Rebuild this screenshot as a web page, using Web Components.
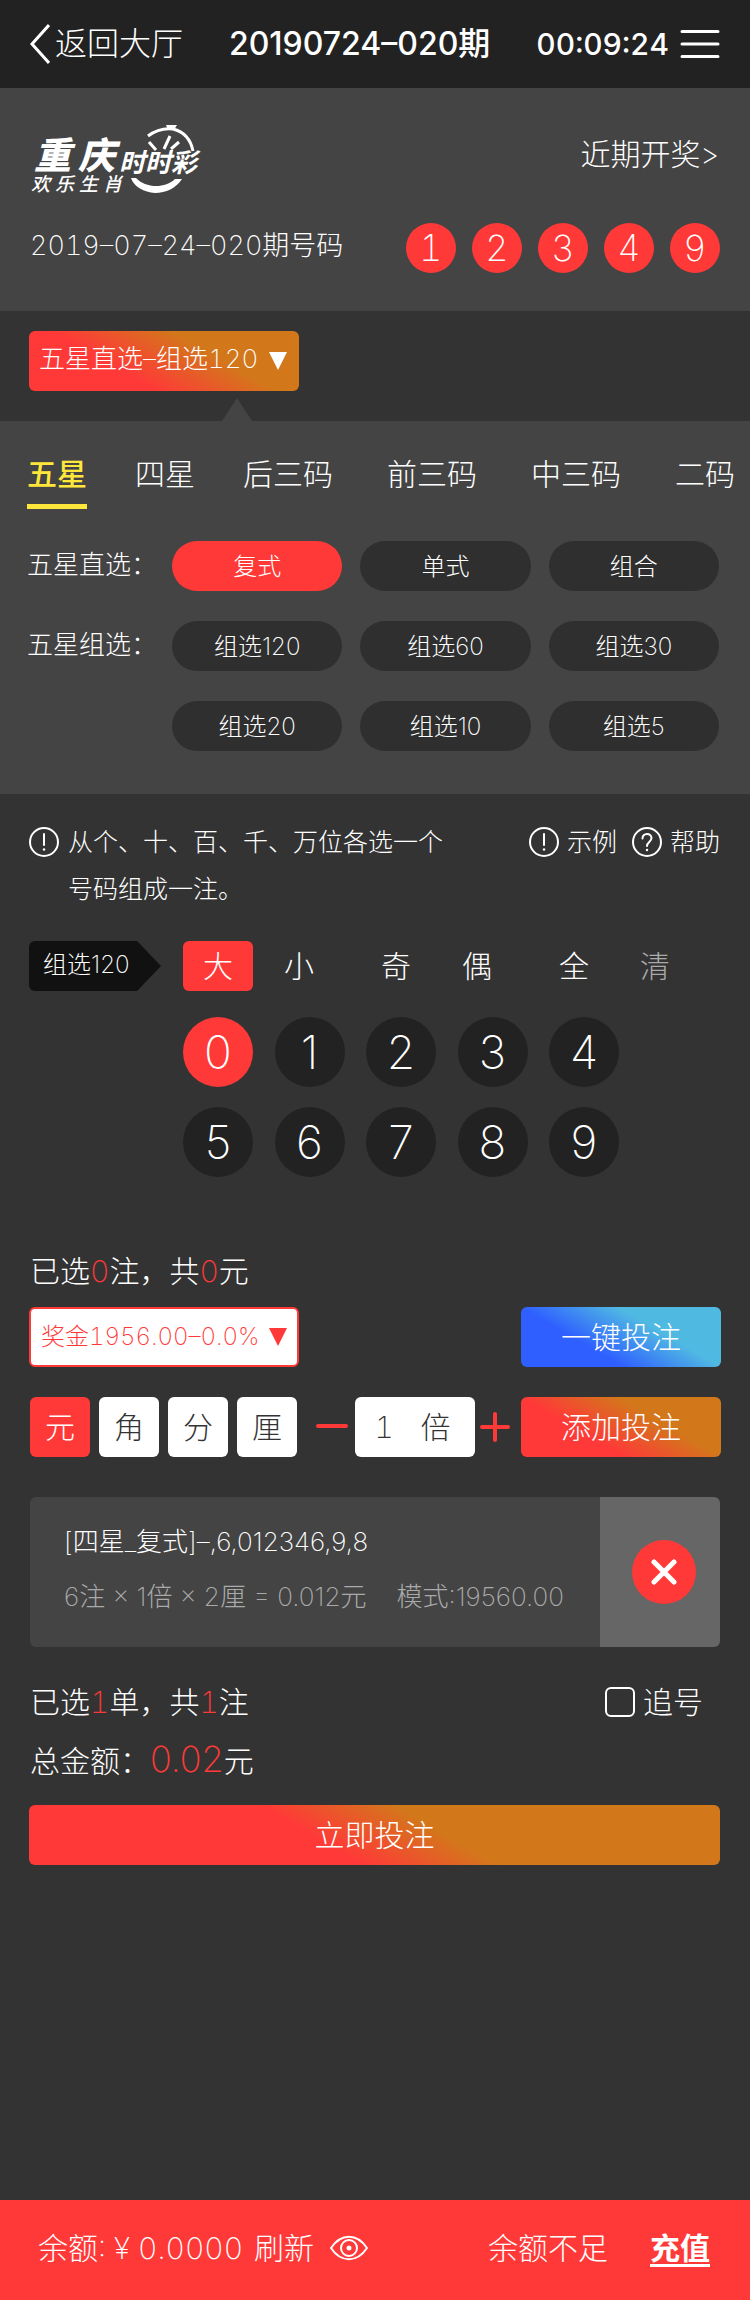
<!DOCTYPE html>
<html lang="zh-CN">
<head>
<meta charset="utf-8">
<meta name="viewport" content="width=device-width, initial-scale=1">
<title>重庆时时彩</title>
<style>
  html, body { margin: 0; padding: 0; }
  body {
    --red: #ff3938; --orange: #d3771b; --panel: #444; --page: #333;
    background: var(--page); color: #fff;
    font-family: Inter, "Noto Sans CJK SC", sans-serif; font-weight: 200; font-size: 30px; line-height: 40px;
    font-variant-numeric: tabular-nums;
  }
</style>
</head>
<body>
<lottery-page></lottery-page>

<script>
const base = `
  *, *::before, *::after { box-sizing: border-box; }
  button, select, input { font: inherit; font-variant-numeric: inherit; color: inherit; background: none; border: 0; margin: 0; padding: 0; border-radius: 0; }
  button { cursor: pointer; white-space: nowrap; }
  a { color: inherit; text-decoration: none; }
  svg { display: block; flex: none; }
  em { font-style: normal; color: var(--red); }
`;
function define(name, css, html) {
  const template = document.createElement('template');
  template.innerHTML = `<style>${base}${css}</style>${html}`;
  customElements.define(name, class extends HTMLElement {
    constructor() {
      super();
      this.attachShadow({ mode: 'open' }).append(template.content.cloneNode(true));
    }
  });
}

define('app-header', `
  :host { display: block; background: #222; }
  header { display: flex; align-items: center; justify-content: space-between; height: 88px; padding: 0 30px; font-size: 32px; }
  a, .right { display: flex; align-items: center; }
  a { gap: 5px; }
  .right { gap: 11px; }
  h1 { margin: 0; font-size: 32px; line-height: 40px; font-variant-numeric: normal; }
  h1, time { font-weight: 500; }
  time { font-size: 30px; }
`, `
  <header>
    <a href="#hall"><svg width="20" height="40" viewBox="0 0 20 40" fill="none" stroke="#fff" stroke-width="3"><path d="M19 1 2 20l17 19"/></svg>返回大厅</a>
    <h1>20190724–020期</h1>
    <div class="right"><time>00:09:24</time>
      <button aria-label="菜单"><svg width="40" height="30" viewBox="0 0 40 30" stroke="#fff" stroke-width="3" stroke-linecap="round"><path d="M2 2.500h36M2 15h36M2 27.500h36"/></svg></button></div>
  </header>`);

define('game-logo', `
  :host { display: block; }
  svg { overflow: visible; font-family: "Noto Sans CJK SC", sans-serif; font-style: italic; }
`, `
  <svg width="172" height="70" viewBox="0 0 172 70" fill="#fff">
    <text x="4 48" y="45" font-size="37" font-weight="900">重庆</text>
    <text x="89" y="48" font-size="26" font-weight="700">时时彩</text>
    <text x="1 25 49 73" y="67" font-size="19" font-weight="500">欢乐生肖</text>
    <path d="M136 1h11l-3 5h-6z"/>
    <g fill="none" stroke="#fff">
      <path stroke-width="3" d="M118 12c8-6 17-8 25-7 12 3 18 12 20 22"/>
      <path stroke-width="3" d="m140 12-6 13M119 18l7 8M149 18l-8 7"/>
    </g>
    <path d="M101 54h5c9 10 29 11 39 1h7c-6 9-16 14-27 14-11-1-21-6-24-15z"/>
  </svg>`);

define('number-ball', `
  :host { display: flex; align-items: center; justify-content: center; width: 50px; height: 50px; border-radius: 50%; background: var(--red); font-size: 36px; }
`, `<slot></slot>`);

define('draw-panel', `
  :host { display: block; background: var(--panel); padding: 36px 30px 38px 30px; }
  div { display: flex; justify-content: space-between; align-items: center; }
  .top { height: 70px; margin-bottom: 29px; }
  .top a { margin-bottom: 10px; }
  .date { font-size: 27px; padding-bottom: 4px; }
  .balls { gap: 16px; }
`, `
  <div class="top"><game-logo></game-logo><a href="#recent">近期开奖&gt;</a></div>
  <div><span class="date">2019–07–24–020期号码</span>
    <div class="balls"><number-ball>1</number-ball><number-ball>2</number-ball><number-ball>3</number-ball><number-ball>4</number-ball><number-ball>9</number-ball></div></div>`);

/* Drop-down: the host's label and option attributes fill a native select. */
customElements.define('drop-down', class extends HTMLElement {
  constructor() {
    super();
    this.attachShadow({ mode: 'open' }).innerHTML = `<style>${base}
      :host { display: block; position: relative; width: 270px; height: 60px; color: #fff; font-size: 26px; }
      select { appearance: none; width: 100%; height: 60px; padding: 0 30px 4px 10px; border-radius: 6px; cursor: pointer;
        background: linear-gradient(30deg, var(--red) 34%, var(--orange) 66%); }
      svg { position: absolute; right: 12px; top: 21px; pointer-events: none; fill: currentColor; }
      :host([outlined]) { color: var(--red); font-size: 24px; }
      :host([outlined]) select { background: #fff; border: 2px solid var(--red); padding-bottom: 0; }
    </style><select aria-label="${this.getAttribute('label')}"><option>${this.getAttribute('option')}</option></select>
    <svg width="18" height="18" viewBox="0 0 18 18"><path d="M0 0h18L9 18z"/></svg>`;
  }
});

define('play-picker', `
  :host { display: block; padding: 20px 29px 7px; }
  svg { margin-left: 193px; margin-top: 7px; fill: var(--panel); margin-bottom: -7px; }
`, `<drop-down label="玩法" option="五星直选–组选120"></drop-down>
  <svg width="30" height="23" viewBox="0 0 30 23"><path d="M0 23 15 0l15 23z"/></svg>`);

define('play-tabs', `
  :host { display: block; }
  nav { display: flex; padding: 33px 0 0 27px; overflow: hidden; }
  button { margin-right: 48px; flex: none; padding-bottom: 10px; border-bottom: 5px solid transparent; }
  .wide { margin-right: 54px; }
  .on { font-weight: 500; color: #ffe63a; border-color: #ffe63a; }
`, `<nav><button class="on">五星</button><button>四星</button><button class="wide">后三码</button><button class="wide">前三码</button><button class="wide">中三码</button><button>二码</button></nav>`);

define('option-group', `
  :host { display: grid; grid-template-columns: 145px 1fr; padding: 0 31px 0 27px; margin-bottom: 30px; }
  .label { font-size: 26px; line-height: 40px; padding-top: 4px; }
  .pills { display: grid; grid-template-columns: repeat(3, 1fr); gap: 30px 18px; }
`, `<span class="label"><slot name="label"></slot></span><div class="pills"><slot></slot></div>`);

define('pill-button', `
  :host { display: block; font-variant-numeric: normal; }
  button { width: 100%; height: 50px; border-radius: 25px; background: #2f2f2f; font-size: 24px; padding-top: 2px; }
  :host([active]) button { background: var(--red); }
`, `<button><slot></slot></button>`);

define('play-panel', `
  :host { display: block; background: var(--panel); padding-bottom: 13px; }
  play-tabs { margin-bottom: 32px; }
`, `<play-tabs></play-tabs>
  <option-group><span slot="label">五星直选：</span><pill-button active>复式</pill-button><pill-button>单式</pill-button><pill-button>组合</pill-button></option-group>
  <option-group><span slot="label">五星组选：</span><pill-button>组选120</pill-button><pill-button>组选60</pill-button><pill-button>组选30</pill-button><pill-button>组选20</pill-button><pill-button>组选10</pill-button><pill-button>组选5</pill-button></option-group>`);

const ring = mark => `<svg width="30" height="32" viewBox="0 0 30 32" fill="none" stroke="#fff" stroke-width="2" stroke-linecap="round"><circle cx="15" cy="16" r="14"/>${mark}</svg>`;
const bang = ring('<path d="M15 8v11"/><path d="M15 23.500v.1" stroke-width="2.500"/>');
const query = ring('<path d="M10.500 12.500c0-6 9-6 9-.5 0 4-4.500 4-4.500 8"/><path d="M15 24v.1" stroke-width="2.500"/>');

define('play-hint', `
  :host { display: flex; justify-content: space-between; padding: 25px 30px 0 29px; font-size: 25px; line-height: 47px; }
  p { margin: 0; width: 376px; }
  div, a { display: flex; align-items: flex-start; }
  div { gap: 15px; }
  div.text { gap: 9px; }
  a { gap: 8px; }
  svg { margin-top: 7px; }
`, `<div class="text">${bang}<p>从个、十、百、千、万位各选一个号码组成一注。</p></div>
  <div><a href="#example">${bang}示例</a><a href="#help">${query}帮助</a></div>`);

define('number-board', `
  :host { display: grid; grid-template-columns: 154px 1fr; align-items: start; padding: 28px 29px 0; font-variant-numeric: normal; }
  .tag { width: 132px; height: 50px; padding: 4px 0 0 14px; font-size: 24px; background: #111; border-radius: 6px;
    clip-path: polygon(0 0, 108px 0, 100% 50%, 108px 100%, 0 100%); }
  .filters, .pair { display: flex; }
  .filters { gap: 27px; }
  .pair { gap: 11px; }
  .pair button { width: 70px; height: 50px; border-radius: 6px; }
  .pair .on, .balls .on { background: var(--red); }
  .pair .off { color: #aaa; }
  .balls { display: grid; grid-template-columns: repeat(5, 70px); justify-content: space-between; row-gap: 20px; width: 436px; margin-top: 26px; }
  .balls button { height: 70px; border-radius: 50%; background: #222; font-size: 46px; line-height: 70px; }
`, `<span class="tag">组选120</span>
  <div><div class="filters">
    <div class="pair"><button class="on">大</button><button>小</button></div>
    <div class="pair"><button>奇</button><button>偶</button></div>
    <div class="pair"><button>全</button><button class="off">清</button></div></div>
    <div class="balls"><button class="on">0</button>${[1,2,3,4,5,6,7,8,9].map(n => `<button>${n}</button>`).join('')}</div></div>`);

define('action-button', `
  :host { display: block; width: 200px; }
  button { width: 100%; height: 60px; border-radius: 6px; background: linear-gradient(30deg, var(--red) 34%, var(--orange) 66%); }
  :host([tone=blue]) button { background: linear-gradient(30deg, #2f60ff 34%, #50b9e2 66%); }
  :host([wide]) { width: auto; }
  :host([wide]) button { background: linear-gradient(30deg, var(--red) 42%, var(--orange) 59%); }
`, `<button><slot></slot></button>`);

define('bet-form', `
  :host { display: block; padding: 74px 29px 0; }
  p { margin: 0 0 16px; padding-left: 1px; }
  .row { display: flex; justify-content: space-between; margin-bottom: 30px; }
  .units { display: flex; gap: 9px; padding-left: 1px; }
  .units button, .times { height: 60px; background: #fff; color: #333; border-radius: 6px; }
  .units button { width: 60px; }
  .units .on { background: var(--red); color: #fff; }
  .stepper { display: flex; align-items: center; gap: 5px; padding-left: 7px; }
  .times { display: flex; align-items: center; width: 120px; padding: 0 22px 0 20px; }
  .times input { width: 46px; outline: 0; }
  .stepper button { stroke: var(--red); }
`, `<p>已选<em>0</em>注，共<em>0</em>元</p>
  <div class="row"><drop-down outlined label="奖金" option="奖金1956.00–0.0%"></drop-down><action-button tone="blue">一键投注</action-button></div>
  <div class="row">
    <div class="units"><button class="on">元</button><button>角</button><button>分</button><button>厘</button></div>
    <div class="stepper">
      <button aria-label="减少"><svg width="34" height="30" viewBox="0 0 34 30" stroke-width="4" stroke-linecap="round"><path d="M2 14h28"/></svg></button>
      <label class="times"><input value="1" inputmode="numeric" aria-label="倍数">倍</label>
      <button aria-label="增加"><svg width="30" height="30" viewBox="0 0 30 30" stroke-width="4" stroke-linecap="round"><path d="M2 15h26M15 2v26"/></svg></button>
    </div>
    <action-button>添加投注</action-button>
  </div>`);

define('bet-slip', `
  :host { display: flex; margin: 10px 30px 0; height: 150px; border-radius: 6px; overflow: hidden; background: var(--panel); font-size: 26px; font-variant-numeric: normal; }
  .body { flex: 1; padding: 25px 0 0 34px; white-space: nowrap; }
  p { margin: 0 0 15px; }
  .sub { color: #aaa; display: flex; gap: 30px; }
  .side { width: 120px; background: #666; display: flex; align-items: center; padding-left: 32px; }
  button { width: 64px; height: 64px; border-radius: 50%; background: var(--red); display: grid; place-items: center; }
`, `<div class="body"><p>[四星_复式]–,6,012346,9,8</p><p class="sub"><span>6注 × 1倍 × 2厘 = 0.012元</span><span>模式:19560.00</span></p></div>
  <div class="side"><button aria-label="删除"><svg width="26" height="26" viewBox="0 0 26 26" stroke="#fff" stroke-width="5" stroke-linecap="round"><path d="m3 3 20 20M23 3 3 23"/></svg></button></div>`);

define('bet-summary', `
  :host { display: block; padding: 35px 30px 0 29px; }
  .row { display: flex; justify-content: space-between; height: 40px; margin-bottom: 17px; padding-left: 1px; }
  label { display: flex; align-items: center; gap: 8px; padding-right: 17px; }
  input { appearance: none; width: 30px; height: 30px; border: 2px solid #fff; border-radius: 6px; }
  .sum { font-size: 36px; font-variant-numeric: normal; }
  action-button { margin-top: 26px; }
`, `<div class="row"><span>已选<em>1</em>单，共<em>1</em>注</span><label><input type="checkbox">追号</label></div>
  <div class="row"><span>总金额：<em class="sum">0.02</em>元</span></div>
  <action-button wide>立即投注</action-button>`);

define('balance-bar', `
  :host { display: block; background: var(--red); margin-top: auto; }
  footer { display: flex; align-items: center; height: 100px; padding: 0 40px 4px 38px; }
  .refresh { margin: 0 16px 0 11px; }
  .short { margin-left: auto; margin-right: 42px; }
  .pay { font-weight: 700; text-decoration: underline; text-decoration-thickness: 3px; text-underline-offset: 5px; }
`, `<footer><span>余额: ¥ 0.0000</span><button class="refresh">刷新</button>
  <button aria-label="显示余额"><svg width="38" height="26" viewBox="0 0 38 26" fill="none" stroke="#fff" stroke-width="2"><path d="M1 13C11-2 27-2 37 13 27 28 11 28 1 13z"/><circle cx="19" cy="13" r="8"/><circle cx="19" cy="13" r="2.500" fill="#fff" stroke="none"/></svg></button>
  <span class="short">余额不足</span><a class="pay" href="#recharge">充值</a></footer>`);

define('lottery-page', `
  :host { display: flex; flex-direction: column; min-height: 100vh; }
`, `<app-header></app-header><draw-panel></draw-panel><play-picker></play-picker><play-panel></play-panel>
  <play-hint></play-hint><number-board></number-board><bet-form></bet-form><bet-slip></bet-slip><bet-summary></bet-summary><balance-bar></balance-bar>`);
</script>
</body>
</html>
